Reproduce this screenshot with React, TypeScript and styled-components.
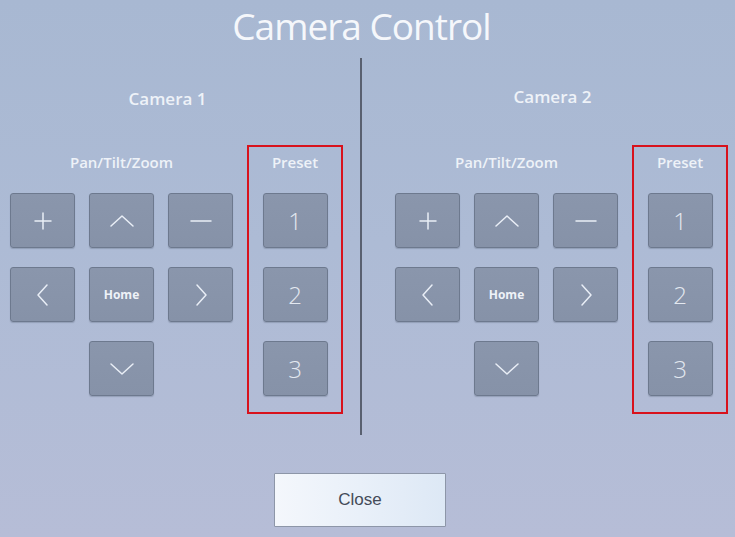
import React from 'react'
import styled, { createGlobalStyle } from 'styled-components'

const GlobalStyle = createGlobalStyle`
  html, body {
    margin: 0;
    padding: 0;
  }
  body {
    font-family: "Open Sans", "Liberation Sans", sans-serif;
  }
`

const Screen = styled.div`
  width: 735px;
  height: 537px;
  overflow: hidden;
  background: linear-gradient(180deg, #a8b8d2 0%, #adbbd5 45%, #b6bdd7 100%);
  display: flex;
  flex-direction: column;
`

const Title = styled.h1`
  margin: 0;
  height: 58px;
  box-sizing: border-box;
  padding: 0 12px 0 0;
  font-size: 37px;
  line-height: 51px;
  letter-spacing: -1px;
  font-weight: 400;
  color: #f5f7fb;
  text-align: center;
`

const Body = styled.div`
  display: flex;
  height: 377px;
`

const Panel = styled.section<{ $left: number; $right: number }>`
  padding: 0 ${p => p.$right}px 0 ${p => p.$left}px;
  display: flex;
  flex-direction: column;
`

const Divider = styled.div`
  width: 2px;
  background: #596070;
`

const CameraName = styled.div<{ $top: number }>`
  padding: ${p => p.$top}px 18px 0 0;
  height: 87px;
  box-sizing: border-box;
  text-align: center;
  font-size: 17px;
  line-height: 20px;
  font-weight: 600;
  color: #eef2f8;
`

const Controls = styled.div`
  display: flex;
  gap: 14px;
  align-items: flex-start;
`

const Column = styled.div`
  display: flex;
  flex-direction: column;
  align-items: center;
  padding-top: 8px;
`

const PresetBox = styled(Column)`
  width: 96px;
  box-sizing: border-box;
  border: 2px solid #d8121c;
  padding: 6px 0 16px;
`

const Label = styled.div`
  font-size: 15px;
  line-height: 18px;
  font-weight: 600;
  color: #eef2f8;
  margin-bottom: 22px;
`

const PadGrid = styled.div`
  display: grid;
  grid-template-columns: repeat(3, 65px);
  grid-auto-rows: 55px;
  column-gap: 14px;
  row-gap: 19px;
`

const PresetList = styled.div`
  display: flex;
  flex-direction: column;
  gap: 19px;
`

const Key = styled.button<{ $col?: number }>`
  width: 65px;
  height: 55px;
  padding: 0;
  box-sizing: border-box;
  border: 1px solid #6d798e;
  border-radius: 3px;
  background: linear-gradient(180deg, #8a96ac 0%, #8692a8 100%);
  box-shadow: 0 1px 1px rgba(60, 70, 90, 0.25);
  color: #e9eef6;
  display: flex;
  align-items: center;
  justify-content: center;
  font-family: "Open Sans", "Liberation Sans", sans-serif;
  grid-column: ${p => (p.$col ? p.$col : 'auto')};
  cursor: pointer;
`

const HomeText = styled.span`
  font-size: 12px;
  font-weight: 700;
  color: #eef2f8;
`

const Number = styled.span`
  font-size: 24px;
  font-weight: 300;
  color: #e3e8f0;
`

const Footer = styled.div`
  flex: 1;
  display: flex;
  justify-content: center;
  padding: 38px 15px 0 0;
`

const CloseButton = styled.button`
  width: 172px;
  height: 54px;
  border: 1px solid #8d96a8;
  border-radius: 1px;
  background: linear-gradient(90deg, #f4f7fc 0%, #e9f0f9 50%, #dde8f5 100%);
  font-family: "Liberation Sans", Arial, sans-serif;
  font-size: 17px;
  color: #444b58;
  cursor: pointer;
`

const Glyph = ({ d }: { d: string }) => (
  <svg width="26" height="26" viewBox="0 0 26 26" fill="none" stroke="#e9eef6" strokeWidth="1.5" strokeLinecap="round" strokeLinejoin="round">
    <path d={d} />
  </svg>
)

const icons = {
  plus: 'M13 5 V21 M5 13 H21',
  minus: 'M3 13 H23',
  up: 'M2 18 L13 8 L24 18',
  down: 'M2 8 L13 18 L24 8',
  left: 'M17 3 L8 13 L17 23',
  right: 'M9 3 L18 13 L9 23',
}

type CameraProps = {
  name: string
  left: number
  right: number
  top: number
}

function Camera({ name, left, right, top }: CameraProps) {
  return (
    <Panel $left={left} $right={right}>
      <CameraName $top={top}>{name}</CameraName>
      <Controls>
        <Column>
          <Label>Pan/Tilt/Zoom</Label>
          <PadGrid>
            <Key><Glyph d={icons.plus} /></Key>
            <Key><Glyph d={icons.up} /></Key>
            <Key><Glyph d={icons.minus} /></Key>
            <Key><Glyph d={icons.left} /></Key>
            <Key><HomeText>Home</HomeText></Key>
            <Key><Glyph d={icons.right} /></Key>
            <Key $col={2}><Glyph d={icons.down} /></Key>
          </PadGrid>
        </Column>
        <PresetBox>
          <Label>Preset</Label>
          <PresetList>
            {[1, 2, 3].map(n => (
              <Key key={n}><Number>{n}</Number></Key>
            ))}
          </PresetList>
        </PresetBox>
      </Controls>
    </Panel>
  )
}

export default function App() {
  return (
    <>
      <GlobalStyle />
      <Screen>
        <Title>Camera Control</Title>
        <Body>
          <Camera name="Camera 1" left={10} right={17} top={31} />
          <Divider />
          <Camera name="Camera 2" left={33} right={0} top={29} />
        </Body>
        <Footer>
          <CloseButton>Close</CloseButton>
        </Footer>
      </Screen>
    </>
  )
}
